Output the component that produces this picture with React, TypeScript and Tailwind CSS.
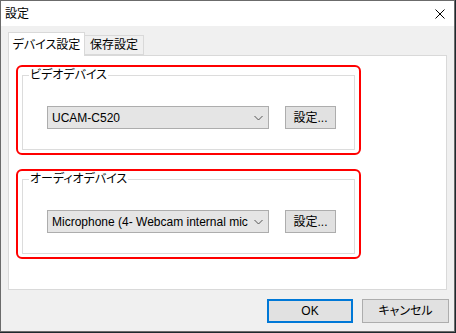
const FONT = "font-['Liberation_Sans','Noto_Sans_CJK_JP',sans-serif] [font-feature-settings:'palt']";

function Chevron() {
  return (
    <svg width="9" height="6" viewBox="0 0 9 6" className="shrink-0">
      <path d="M0.5 1L4.5 5L8.5 1" fill="none" stroke="#555" strokeWidth="1" />
    </svg>
  );
}

function DeviceGroup({ label, value }: { label: string; value: string }) {
  return (
    <div className="w-[345px] h-[90px] border-2 border-[#ff0000] rounded-[6px] pl-[4px]">
      <fieldset className="w-[333px] h-[83px] border border-[#dcdcdc]">
        <legend className="ml-[6px] px-[1px] leading-[16px] text-[12px]">{label}</legend>
        <div className="flex items-center gap-[16px] pl-[24px] pt-[23px]">
          <div className="w-[222px] h-[23px] bg-[#e5e5e5] border border-[#adadad] flex items-center pl-[4px] pr-[5px]">
            <span className="flex-1 overflow-hidden whitespace-nowrap text-[12px] leading-[16px]">
              {value}
            </span>
            <div className="ml-[2px]">
              <Chevron />
            </div>
          </div>
          <button
            type="button"
            className="w-[51px] h-[23px] bg-[#e1e1e1] border border-[#adadad] text-[12px] leading-[16px]"
          >
            設定...
          </button>
        </div>
      </fieldset>
    </div>
  );
}

export default function App() {
  return (
    <div className={`w-[456px] h-[333px] bg-[#1d2a2e] ${FONT} text-black`}>
      <div className="w-[455px] h-[332px] border border-[#6b6b6b] bg-[#f0f0f0] flex flex-col">
        {/* title bar */}
        <div className="h-[25px] bg-white flex items-center justify-between pl-[4px] pr-[8px]">
          <span className="text-[12px] leading-[16px]">設定</span>
          <svg width="10" height="10" viewBox="0 0 10 10" className="mr-[1px]">
            <path d="M0.5 0.5L9.5 9.5M9.5 0.5L0.5 9.5" stroke="#000" strokeWidth="1" />
          </svg>
        </div>

        <div className="flex-1 flex flex-col pt-[6px]">
          {/* tabs */}
          <div className="flex items-end h-[23px] mx-[7px]">
            <div className="relative z-10 w-[77px] h-[24px] -mb-px bg-white border border-b-0 border-[#d9d9d9] flex items-center justify-center text-[12px] leading-[16px]">
              デバイス設定
            </div>
            <div className="w-[59px] h-[20px] bg-[#f0f0f0] border border-l-0 border-[#d9d9d9] flex items-center justify-center text-[12px] leading-[16px]">
              保存設定
            </div>
          </div>

          {/* panel */}
          <div className="mx-[7px] h-[235px] bg-white border border-[#d9d9d9] pl-[7px] pt-[9px] flex flex-col gap-[14px]">
            <DeviceGroup label="ビデオデバイス" value="UCAM-C520" />
            <DeviceGroup label="オーディオデバイス" value="Microphone (4- Webcam internal mic" />
          </div>

          {/* buttons */}
          <div className="flex justify-end gap-[9px] pr-[5px] mt-[9px]">
            <button
              type="button"
              className="w-[86px] h-[24px] bg-[#e1e1e1] border-2 border-[#0078d7] text-[12px] leading-[16px]"
            >
              OK
            </button>
            <button
              type="button"
              className="w-[87px] h-[24px] bg-[#e1e1e1] border border-[#adadad] text-[12px] leading-[16px]"
            >
              キャンセル
            </button>
          </div>
        </div>
      </div>
    </div>
  );
}
